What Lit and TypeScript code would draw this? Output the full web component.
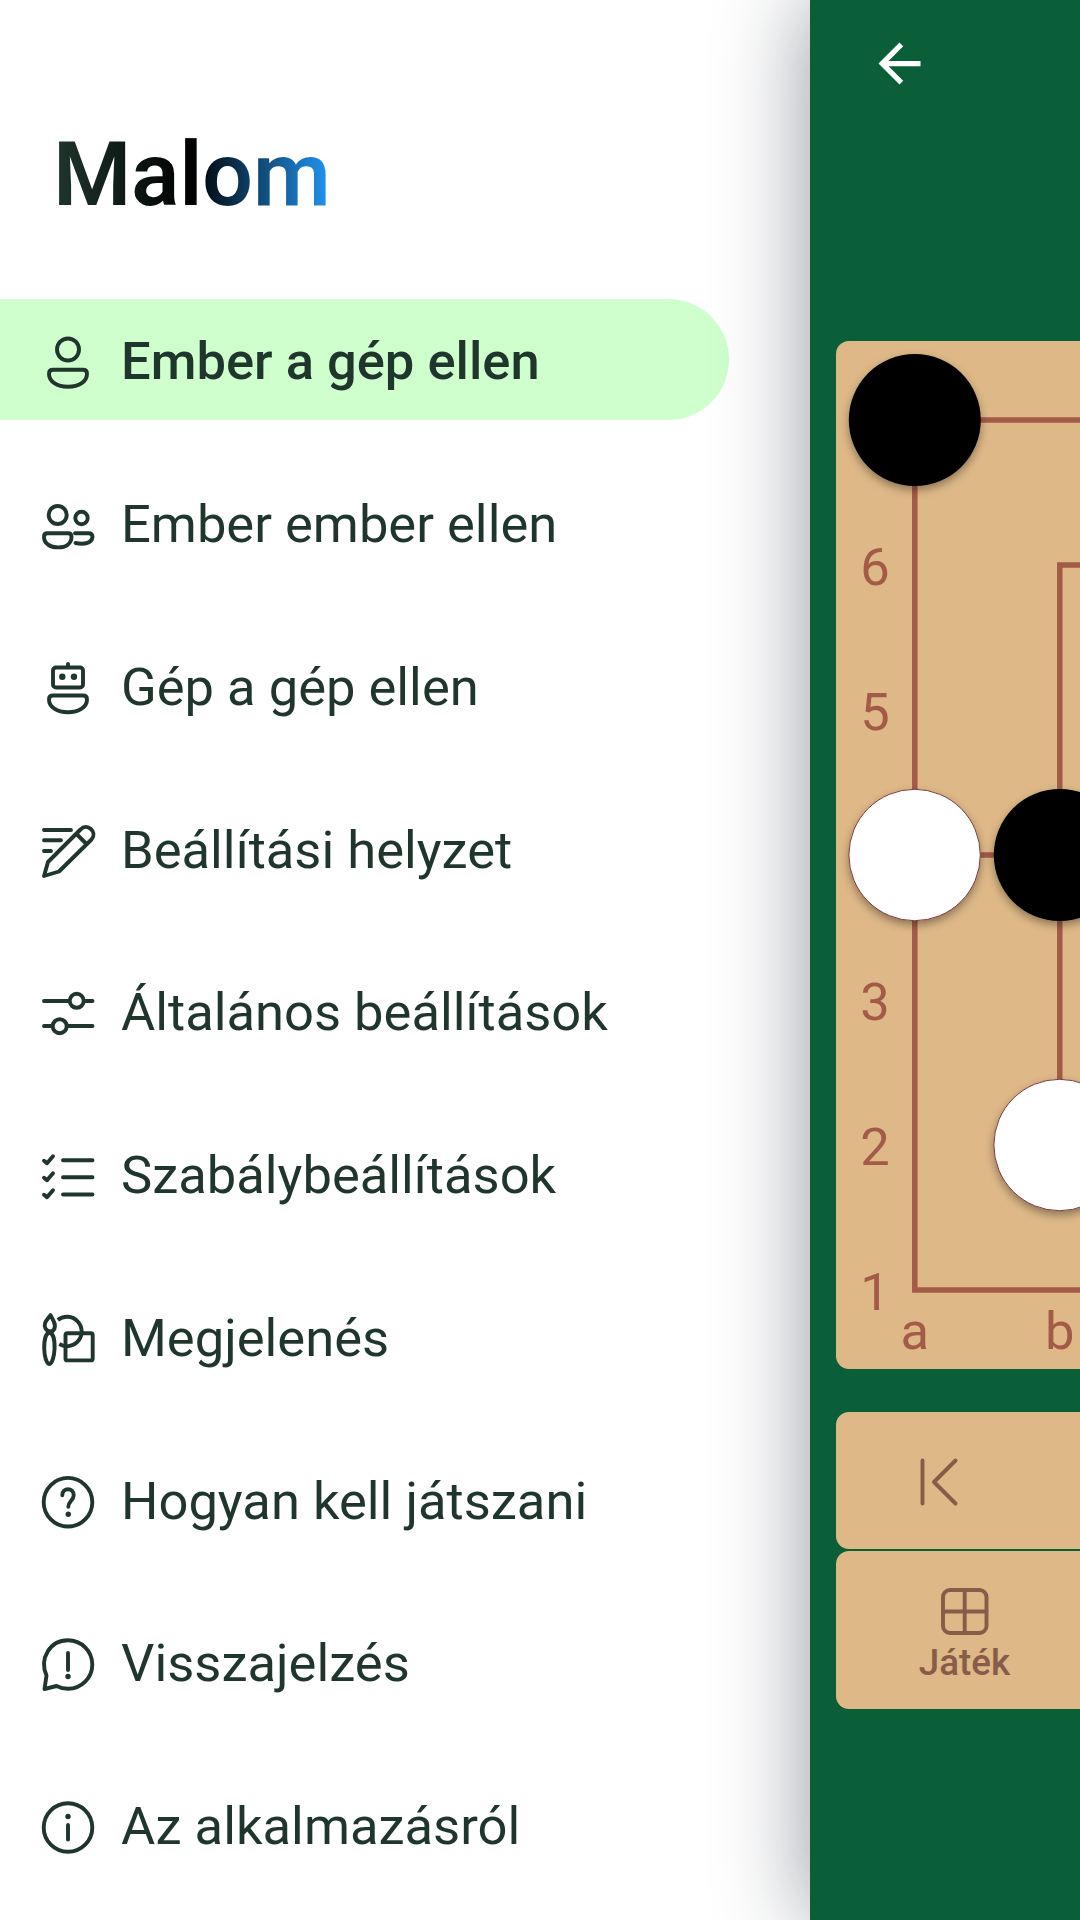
import { LitElement, html, svg, css } from "lit";
import { customElement } from "lit/decorators.js";

// Icon art is drawn in a 64x64 box, one unit per pixel.
const body = svg`<path d="M17 38.700H47Q51 38.700 51 42.700C51 50.500 43 55.800 32 55.800S13 50.500 13 42.700Q13 38.700 17 38.700Z"/>`;

const menu = [
  { label: "Ember a gép ellen", art: svg`<circle cx="32" cy="18.500" r="11"/>${body}` },
  {
    label: "Ember ember ellen",
    art: svg`<circle cx="21.700" cy="21" r="9"/><circle cx="45.500" cy="24" r="6.200"/>
      <path d="M11.500 39.200H32Q35.500 39.200 35.500 42.700C35.500 49.500 30 53.400 22 53.400S8 49.500 8 42.700Q8 39.200 11.500 39.200Z"/>
      <path d="M39 39.200H52.500Q56.500 39.200 56.500 43C56 48.500 49 51 39.500 49"/>`,
  },
  {
    label: "Gép a gép ellen",
    art: svg`<rect x="17" y="11.500" width="30" height="20" rx="3"/><path d="M32 8V10.500"/>
      <circle class="dot" cx="26.300" cy="20.700" r="3.200"/><circle class="dot" cx="38" cy="20.700" r="3.200"/>
      <path d="M17 39.500H47Q51 39.500 51 43.500C51 51 43 56.300 32 56.300S13 51 13 43.500Q13 39.500 17 39.500Z"/>`,
  },
  {
    label: "Beállítási helyzet",
    art: svg`<path d="M8 11H35M8 21.300H25M8 32H15"/>
      <path d="M44.500 10.500C51 3.500 62 13 55.500 20.500L23 52.500L8 57L12 43Z"/><path d="M40.500 15L50.500 25"/>`,
  },
  {
    label: "Általános beállítások",
    art: svg`<path d="M8 19H33M49 19H56.500M8 44H16M32 44H56.500"/>
      <circle cx="40.700" cy="18.800" r="7"/><circle cx="23.700" cy="44.200" r="7"/>`,
  },
  {
    label: "Szabálybeállítások",
    art: svg`<path d="M27 15.300H56.500M27 32.300H56.500M27 49.500H56.500"/>
      <path d="M8 15.800L11 18.300L17 11.300M8 32.800L11 35.300L17 28.300M8 49.800L11 52.300L17 45.300"/>`,
  },
  {
    label: "Megjelenés",
    art: svg`<path d="M14.500 8C18 15 20 17 18.500 21.500C17 25.500 12 25.500 9.500 21.500C7 16 11 13 14.500 8Z"/>
      <path d="M13.500 25.500C5.500 27.500 7.500 56.500 13.300 57C19 56.500 21.500 27.500 13.500 25.500Z"/>
      <path stroke-linecap="butt" d="M21.800 13A14.700 14.700 0 1 1 23.300 37"/>
      <rect x="29.500" y="26.200" width="27.200" height="27.200" rx="2"/>`,
  },
  {
    label: "Hogyan kell játszani",
    art: svg`<circle cx="32" cy="32.200" r="24.300"/>
      <path d="M26.300 25.200C26.300 17.200 37.700 17.200 37.700 25.200C37.700 30.200 32.300 31.200 32.300 36.700"/>
      <circle class="dot" cx="32.300" cy="44.200" r="2.700"/>`,
  },
  {
    label: "Visszajelzés",
    art: svg`<path d="M10.500 42.500C3 25.500 14 7.200 32 7.200A24.300 24.300 0 0 1 32 55.800Q26 55.800 20.500 53L8.500 56Z"/>
      <path d="M32 20V37"/><circle class="dot" cx="32" cy="43.500" r="2.700"/>`,
  },
  {
    label: "Az alkalmazásról",
    art: svg`<circle cx="32" cy="31.500" r="24.300"/><path d="M32 29V43.500"/>
      <circle class="dot" cx="32" cy="20.500" r="2.700"/>`,
  },
];

const ranks = ["6", "5", "", "3", "2", "1"];

@customElement("app-root")
export class AppRoot extends LitElement {
  static styles = css`
    :host { display: block; font-family: Roboto, sans-serif; }
    .page { display: flex; width: 1080px; height: 1920px; overflow: hidden; background: #fff; }
    .drawer { width: 810px; flex: none; color: #1f362d; }
    .title {
      width: fit-content; margin: 122px 0 0 53px; height: 177px; line-height: 105px;
      font-size: 89.500px; font-weight: 600; letter-spacing: -0.100px; white-space: nowrap;
      background: linear-gradient(90deg, #1f362d 0%, #000 50%, #2196f3 100%);
      background-clip: text; -webkit-background-clip: text; color: transparent;
    }
    .item {
      box-sizing: border-box; width: 729px; height: 120.750px; margin-bottom: 42px; padding: 4px 0 0 36px;
      display: flex; align-items: center; gap: 21px; border-radius: 0 60.400px 60.400px 0;
      font-size: 52.500px; line-height: 62px; white-space: nowrap;
    }
    .item.on { background: #d0ffce; font-weight: 500; }
    .icon { width: 64px; height: 64px; flex: none; overflow: visible; margin-top: 3.200px; }
    .icon, .tool { fill: none; stroke: currentColor; stroke-width: 3.900; stroke-linecap: round; stroke-linejoin: round; }
    .dot { fill: currentColor; stroke: none; }
    .game {
      position: relative; width: 270px; flex: none; background: #0a5f38;
      box-shadow: 0 0 86px rgba(20, 28, 45, 0.460);
    }
    .bar { height: 341px; box-sizing: border-box; padding: 31.500px 0 0 58.300px; }
    .back { display: block; width: 63px; height: 63px; fill: #fff; }
    .wood { margin-left: 26px; background: #deb887; border-radius: 13px 0 0 13px; }
    .board { height: 1027.500px; }
    .board svg { display: block; width: 244px; height: 1027.500px; }
    .lines { fill: none; stroke: #a35b48; stroke-width: 5.500; }
    .label { fill: #a35b48; font: 400 52.500px Roboto, sans-serif; text-anchor: middle; }
    .stone { filter: drop-shadow(0 4px 4px rgba(0, 0, 0, 0.360)); }
    .white { fill: #fff; stroke: #843a3c; stroke-width: 1; }
    .nav { margin-top: 43.500px; height: 136.500px; display: flex; align-items: center; color: #875c49; }
    .nav .tool { margin: 3px 0 0 72.500px; }
    .tool { width: 63px; height: 63px; display: block; }
    .tabs { margin-top: 2.500px; height: 157.500px; display: flex; color: #875c49; }
    .tab { width: 257px; flex: none; display: flex; flex-direction: column; align-items: center; padding-top: 28.500px; font-size: 36.750px; line-height: 40px; font-weight: 500; }
  `;

  render() {
    return html`<div class="page">
      <nav class="drawer">
        <div class="title">Malom</div>
        ${menu.map(
          (m, i) => html`<div class="item ${i === 0 ? "on" : ""}">
            <svg class="icon" viewBox="0 0 64 64">${m.art}</svg><span>${m.label}</span>
          </div>`
        )}
      </nav>
      <main class="game">
        <div class="bar">
          <svg class="back" viewBox="0 0 24 24"><path d="M20 11H7.830l5.590-5.590L12 4l-8 8 8 8 1.410-1.410L7.830 13H20v-2z" /></svg>
        </div>
        <div class="wood board">
          <svg viewBox="0 0 244 1027.500">
            <path class="lines" d="M300 79H78.800V949H300M300 224H223.800V804H300M78.800 514H300" />
            ${ranks.map((r, i) => svg`<text class="label" x="39" y=${243.5 + i * 145}>${r}</text>`)}
            <text class="label" x="78.800" y="1008">a</text>
            <text class="label" x="223.700" y="1008">b</text>
            <circle class="stone" cx="78.800" cy="79" r="66" />
            <circle class="stone white" cx="78.600" cy="514" r="65.700" />
            <circle class="stone" cx="223.800" cy="514" r="66" />
            <circle class="stone white" cx="223.600" cy="804" r="65.700" />
          </svg>
        </div>
        <div class="wood nav">
          <svg class="tool" viewBox="0 0 63 63"><path d="M13.500 10.500V53.500M46.500 10.500L25 32L46.500 53.500" /></svg>
        </div>
        <div class="wood tabs">
          <div class="tab">
            <svg class="tool" viewBox="0 0 63 63">
              <rect x="10" y="10" width="43.500" height="43" rx="7" /><path d="M31.700 10V53M10 31.500H53.500" />
            </svg>
            <span>Játék</span>
          </div>
        </div>
      </main>
    </div>`;
  }
}
